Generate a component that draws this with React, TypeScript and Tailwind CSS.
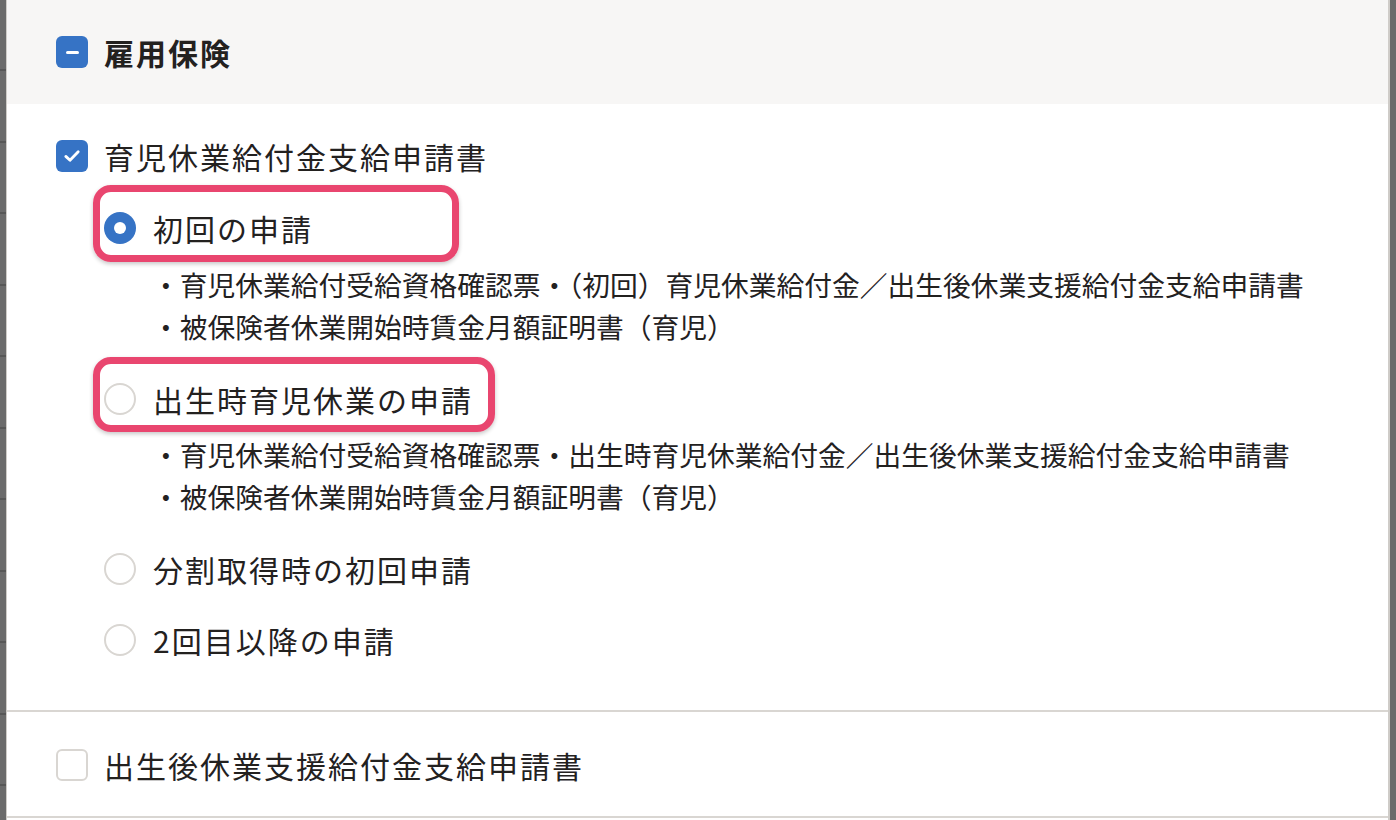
import React from 'react';

const font = { fontFamily: '"Noto Sans CJK JP", "Noto Sans", sans-serif' };

// Checkbox box: checked / indeterminate / empty
const Box = ({ state }: { state: 'checked' | 'minus' | 'empty' }) => {
  if (state === 'empty') {
    return <span className="block w-8 h-8 shrink-0 rounded-[6px] border-2 border-[#d9d6d2] bg-white" />;
  }
  return (
    <span className="flex w-8 h-8 shrink-0 items-center justify-center rounded-[6px] bg-[#3673c5]">
      {state === 'minus' ? (
        <span className="block w-[13px] h-[3px] rounded-full bg-white" />
      ) : (
        <svg width="20" height="20" viewBox="0 0 20 20" fill="none" aria-hidden="true">
          <path d="M3.8 10.4l4.2 3.9L16.2 5.8" stroke="white" strokeWidth="2.8" strokeLinecap="round" strokeLinejoin="round" />
        </svg>
      )}
    </span>
  );
};

const Radio = ({ on }: { on?: boolean }) =>
  on ? (
    <span className="flex w-8 h-8 shrink-0 items-center justify-center rounded-full bg-[#3673c5]">
      <span className="block w-3 h-3 rounded-full bg-white" />
    </span>
  ) : (
    <span className="block w-8 h-8 shrink-0 rounded-full border-2 border-[#d9d6d2] bg-white" />
  );

const RadioRow = ({
  label,
  on,
  mark,
  className = '',
}: {
  label: string;
  on?: boolean;
  mark?: 'first' | 'second';
  className?: string;
}) => (
  <div className={`relative flex items-center gap-[17px] h-[44px] ${className}`}>
    {/* annotation frame drawn over the row */}
    {mark === 'first' && (
      <span className="absolute left-[-11px] top-[-21px] w-[366px] h-[77px] rounded-[18px] border-[7px] border-[#e9466f] shadow-[0_2px_4px_rgba(0,0,0,0.22)]" />
    )}
    {mark === 'second' && (
      <span className="absolute left-[-11px] top-[-20px] w-[402px] h-[75px] rounded-[18px] border-[7px] border-[#e9466f] shadow-[0_2px_4px_rgba(0,0,0,0.22)]" />
    )}
    <Radio on={on} />
    <span className="text-[30px] tracking-[2px] leading-[44px] text-[#23211f]">{label}</span>
  </div>
);

const SubList = ({ lines, className = '' }: { lines: string[]; className?: string }) => (
  <ul className={`pl-[48px] ${className}`}>
    {lines.map((l) => (
      <li key={l} className="text-[27.75px] leading-[42px] text-[#23211f] whitespace-nowrap">
        {l}
      </li>
    ))}
  </ul>
);

export default function App() {
  return (
    <div className="flex w-[1396px] h-[820px] overflow-hidden bg-[#6b6b6b]" style={font}>
      <div className="w-[6px] shrink-0 bg-[repeating-linear-gradient(to_bottom,#6b6b6b_0px,#6b6b6b_69px,#575757_69px,#575757_71.5px)]" />
      <div className="flex-1 flex flex-col bg-white border-l border-r-2 border-[#cfccc8]">
        {/* section header */}
        <div className="flex items-center gap-[16px] h-[104px] shrink-0 pl-[49px] bg-[#f7f6f5]">
          <Box state="minus" />
          <span className="text-[30px] tracking-[2px] font-bold text-[#23211f]">雇用保険</span>
        </div>

        <div className="flex flex-col pl-[49px] pt-[30px] pb-[48px] border-b-2 border-[#d9d6d2]">
          <div className="flex items-center gap-[16px] h-[44px]">
            <Box state="checked" />
            <span className="text-[30px] tracking-[2px] text-[#23211f]">育児休業給付金支給申請書</span>
          </div>

          <div className="flex flex-col pl-[48px]">
            <RadioRow label="初回の申請" on mark="first" className="mt-[28px]" />
            <SubList
              className="mt-[13px]"
              lines={[
                '・育児休業給付受給資格確認票・（初回）育児休業給付金／出生後休業支援給付金支給申請書',
                '・被保険者休業開始時賃金月額証明書（育児）',
              ]}
            />
            <RadioRow label="出生時育児休業の申請" mark="second" className="mt-[30px]" />
            <SubList
              className="mt-[12px]"
              lines={[
                '・育児休業給付受給資格確認票・出生時育児休業給付金／出生後休業支援給付金支給申請書',
                '・被保険者休業開始時賃金月額証明書（育児）',
              ]}
            />
            <RadioRow label="分割取得時の初回申請" className="mt-[30px]" />
            <RadioRow label="2回目以降の申請" className="mt-[27px]" />
          </div>
        </div>

        <div className="flex items-center gap-[16px] pl-[49px] pt-[31px] pb-[29px] border-b-2 border-[#d9d6d2]">
          <Box state="empty" />
          <span className="text-[30px] tracking-[2px] leading-[44px] text-[#23211f]">出生後休業支援給付金支給申請書</span>
        </div>
      </div>
      <div className="w-[6px] shrink-0 bg-[#6b6b6b]" />
    </div>
  );
}
